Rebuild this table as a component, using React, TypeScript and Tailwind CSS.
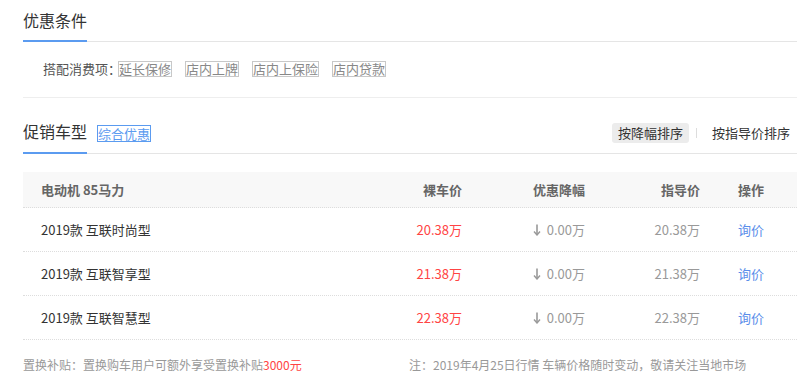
import React from "react";

const tags = ["延长保修", "店内上牌", "店内上保险", "店内贷款"];

const rows = [
  { name: "2019款 互联时尚型", price: "20.38万", cut: "0.00万", guide: "20.38万" },
  { name: "2019款 互联智享型", price: "21.38万", cut: "0.00万", guide: "21.38万" },
  { name: "2019款 互联智慧型", price: "22.38万", cut: "0.00万", guide: "22.38万" },
];

const font = {
  fontFamily: '"Microsoft YaHei", "Noto Sans CJK SC", "Liberation Sans", sans-serif',
};

const DownArrow = () => (
  <svg width="8" height="12" viewBox="0 0 8 12" className="inline-block mr-[6px] -mt-[2px] align-middle">
    <path d="M4 0.5V10.5" stroke="#999" strokeWidth="1.6" fill="none" />
    <path d="M1 7.5L4 11L7 7.5" stroke="#999" strokeWidth="1.4" fill="none" />
  </svg>
);

const App = () => {
  return (
    <div className="w-[806px] h-[386px] bg-white text-[#333] pl-[23px] pr-[9px]" style={font}>
      {/* 优惠条件 */}
      <div className="h-[42px] border-b border-[#e5e5e5] flex items-end">
        <h2 className="w-[64px] text-[16px] leading-[20px] pb-[10px] border-b-2 border-[#5b9bf0] -mb-px whitespace-nowrap">
          优惠条件
        </h2>
      </div>
      <div className="h-[56px] border-b border-[#eeeeee] flex items-center pl-[20px] text-[13px] text-[#555] pb-[2px]">
        <span className="mr-[-3px]">搭配消费项：</span>
        <div className="flex gap-[13px]">
          {tags.map((t) => (
            <span
              key={t}
              className="border border-[#c8c8c8] text-[#888] h-[16px] leading-[14px] whitespace-nowrap"
            >
              {t}
            </span>
          ))}
        </div>
      </div>

      {/* 促销车型 */}
      <div className="h-[56px] border-b border-[#e5e5e5] flex items-end justify-between">
        <div className="flex items-end">
          <h2 className="w-[64px] text-[16px] leading-[20px] pb-[11px] border-b-2 border-[#5b9bf0] -mb-px whitespace-nowrap">
            促销车型
          </h2>
          <span className="ml-[10px] mb-[11px] border border-[#5b9bf0] text-[#5b9bf0] text-[13px] h-[17px] leading-[15px] whitespace-nowrap">
            综合优惠
          </span>
        </div>
        <div className="flex items-center text-[13px] mb-[10px] mr-[7px]">
          <span className="bg-[#ececec] rounded-[3px] px-[6px] h-[20px] leading-[20px] text-[#333]">
            按降幅排序
          </span>
          <span className="ml-[7px] mr-[8px] h-[10px] w-px bg-[#ddd]" />
          <span className="ml-[7px] text-[#333]">按指导价排序</span>
        </div>
      </div>

      {/* table */}
      <div className="mt-[18px] text-[13px]">
        <div className="grid grid-cols-[321px_100px_123px_115px_1fr] h-[36px] items-center bg-[#f8f8f8] pl-[18px] font-bold text-[#666] border-b border-dotted border-[#ddd]">
          <span>电动机 85马力</span>
          <span className="text-right">裸车价</span>
          <span className="text-right">优惠降幅</span>
          <span className="text-right">指导价</span>
          <span className="pl-[38px]">操作</span>
        </div>
        {rows.map((r) => (
          <div
            key={r.name}
            className="grid grid-cols-[321px_100px_123px_115px_1fr] h-[44px] items-center pl-[18px] border-b border-dotted border-[#ddd]"
          >
            <span className="text-[#333]">{r.name}</span>
            <span className="text-right text-[#ff4444]">{r.price}</span>
            <span className="text-right text-[#999]">
              <DownArrow />
              {r.cut}
            </span>
            <span className="text-right text-[#999]">{r.guide}</span>
            <span className="pl-[38px] text-[#5b8eea]">询价</span>
          </div>
        ))}
      </div>

      {/* footer */}
      <div className="flex mt-[17px] text-[12px] text-[#999] leading-[16px] whitespace-nowrap">
        <span className="w-[386px]">
          置换补贴：置换购车用户可额外享受置换补贴<span className="text-[#ff4444]">3000元</span>
        </span>
        <span>注：2019年4月25日行情 车辆价格随时变动，敬请关注当地市场</span>
      </div>
    </div>
  );
};

export default App;
